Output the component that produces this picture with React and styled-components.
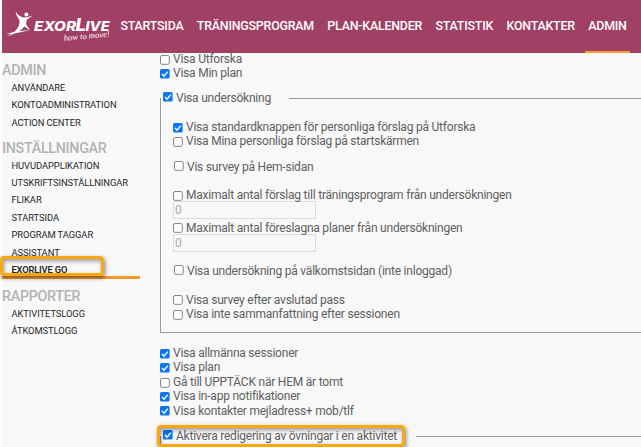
import React from "react";
import styled, { createGlobalStyle } from "styled-components";

const GlobalStyle = createGlobalStyle`
  * {
    box-sizing: border-box;
  }
  body {
    margin: 0;
    background: #fff;
    font-family: Roboto, "Liberation Sans", sans-serif;
  }
`;

const Page = styled.div`
  width: 641px;
  height: 447px;
  padding-left: 2px;
  background: #f8f8f8 content-box;
  display: flex;
  flex-direction: column;
  overflow: hidden;
`;

const Header = styled.header`
  height: 53px;
  flex-shrink: 0;
  background: #9f4064;
  display: flex;
`;

const Logo = styled.svg`
  width: 115px;
  height: 53px;
  flex-shrink: 0;
`;

const Nav = styled.nav`
  display: flex;
  gap: 6.4px;
`;

const NavLink = styled.a`
  height: 53px;
  padding: 0 3.5px;
  font-size: 12.4px;
  font-weight: 500;
  letter-spacing: -0.2px;
  line-height: 51px;
  white-space: nowrap;
  color: #fff;
  border-bottom: 2px solid ${({ $active }) => ($active ? "#fb9a2c" : "transparent")};
`;

const Content = styled.div`
  flex: 1;
  min-height: 0;
  display: flex;
`;

const Sidebar = styled.aside`
  width: 138px;
  flex-shrink: 0;
  padding-top: 8px;
`;

const MenuGroup = styled.section`
  margin-bottom: 7.6px;
`;

const MenuTitle = styled.h2`
  margin: 0;
  height: 18px;
  font-size: 14.3px;
  font-weight: 500;
  letter-spacing: -0.3px;
  line-height: 18.4px;
  color: #b3b3b3;
`;

const MenuItem = styled.a`
  position: relative;
  display: block;
  height: ${({ $active }) => ($active ? "18.1px" : "17.38px")};
  padding-left: 9.5px;
  font-size: 9.4px;
  font-weight: ${({ $active }) => ($active ? 600 : 400)};
  letter-spacing: ${({ $active }) => ($active ? "-0.2px" : "-0.08px")};
  line-height: 17.8px;
  color: #262626;
  white-space: nowrap;
  border-bottom: ${({ $active }) => ($active ? "3px solid #fb9a2c" : "0")};
`;

const Highlight = styled.span`
  position: absolute;
  left: ${({ $left }) => $left}px;
  top: ${({ $top }) => $top}px;
  width: ${({ $width }) => $width}px;
  height: ${({ $height }) => $height}px;
  border: 3px solid #faa80f;
  border-radius: 4px;
  box-shadow: 1px 2px 4px rgba(0, 0, 0, 0.5), inset 1px 2px 4px rgba(0, 0, 0, 0.4);
`;

const Settings = styled.main`
  width: 520px;
  flex-shrink: 0;
  margin-left: 20px;
  margin-top: -1px;
`;

const Row = styled.label`
  display: flex;
  height: 14px;
  margin-top: ${({ $gap }) => $gap || 0}px;
  margin-left: ${({ $indent }) => $indent || 0}px;
  font-size: 12px;
  letter-spacing: -0.22px;
  line-height: 14px;
  color: #606060;
  white-space: nowrap;
`;

const Box = styled.svg`
  width: 10px;
  height: 10px;
  flex-shrink: 0;
  margin-top: ${({ $drop }) => $drop}px;
  margin-right: 3px;
`;

const Fieldset = styled.fieldset`
  min-width: 0;
  height: ${({ $height }) => $height}px;
  margin: ${({ $gap }) => $gap}px 0 0;
  padding: 0;
  border: 1px solid #999;
`;

const Legend = styled.legend`
  position: relative;
  width: ${({ $width }) => $width}px;
  padding: 0 0 0 2px;
`;

const NumberInput = styled.input`
  display: block;
  width: 143px;
  height: 18px;
  margin: -1px 0 0 12px;
  padding: 0 1px;
  border: 1px solid #dcdcdc;
  background: transparent;
  font-family: inherit;
  font-size: 12px;
  color: #aaa;
`;

const menu = [
  { title: "ADMIN", items: ["ANVÄNDARE", "KONTOADMINISTRATION", "ACTION CENTER"] },
  {
    title: "INSTÄLLNINGAR",
    items: [
      "HUVUDAPPLIKATION",
      "UTSKRIFTSINSTÄLLNINGAR",
      "FLIKAR",
      "STARTSIDA",
      "PROGRAM TAGGAR",
      "ASSISTANT",
      "EXORLIVE GO",
    ],
  },
  { title: "RAPPORTER", items: ["AKTIVITETSLOGG", "ÅTKOMSTLOGG"] },
];

const navItems = [
  "STARTSIDA",
  "TRÄNINGSPROGRAM",
  "PLAN-KALENDER",
  "STATISTIK",
  "KONTAKTER",
  "ADMIN",
];

const Check = ({ checked, drop = 3, gap, indent, children }) => (
  <Row $gap={gap} $indent={indent}>
    <Box viewBox="0 0 10 10" $drop={drop}>
      {checked ? (
        <>
          <rect width="9.6" height="9.6" rx="1.5" fill="#0b75f5" />
          <path d="M2 5.1l2 2 3.8-4.5" fill="none" stroke="#fff" strokeWidth="1.4" />
        </>
      ) : (
        <rect x="0.5" y="0.5" width="8.8" height="8.8" rx="1.5" fill="#fff" stroke="#858585" />
      )}
    </Box>
    {children}
  </Row>
);

const App = () => (
  <>
    <GlobalStyle />
    <Page>
      <Header>
        <Logo viewBox="2 0 115 53" fill="#fff">
          <circle cx="26.4" cy="14.6" r="2" />
          <path d="M15.600 11.600c2 3.300 4.400 5.200 7.400 5.800 3 .3 6-.4 9.600-1.800-2.200 2-4.800 3-5.800 4.600-.9 1.500-.6 3.200-.5 4.400.8 1.700 2 3.300 3.800 5.600-2.400-1.300-4.200-2.600-5.700-4-2.200 3.600-7.600 7.200-17.400 10.200 6-3.400 10.300-6.600 11.600-10.500.9-2.200 1.400-4.600.6-6.200-1.300-2.200-3.200-4.300-3.600-8.100z" />
          <path d="M6 34.200c6-2.200 14-3.600 24-3.900-8 1.800-16 3.500-24 3.900z" />
          <g fontFamily="Inter, sans-serif" fontWeight="800" fontStyle="italic">
            <text x="34" y="30.600" fontSize="13.400" textLength="42" lengthAdjust="spacingAndGlyphs">EXOR</text>
            <text x="75.500" y="30.600" fontSize="18" textLength="10.500" lengthAdjust="spacingAndGlyphs">L</text>
            <text x="85.500" y="30.600" fontSize="13.400" textLength="24" lengthAdjust="spacingAndGlyphs">IVE</text>
          </g>
          <text
            x="64"
            y="40.800"
            fontFamily="Liberation Serif, serif"
            fontStyle="italic"
            fontSize="8.500"
            textLength="46"
            transform="rotate(-5 64 40.800)"
          >
            how to move!
          </text>
        </Logo>
        <Nav>
          {navItems.map((item) => (
            <NavLink key={item} $active={item === "ADMIN"}>{item}</NavLink>
          ))}
        </Nav>
      </Header>
      <Content>
        <Sidebar>
          {menu.map((group) => (
            <MenuGroup key={group.title}>
              <MenuTitle>{group.title}</MenuTitle>
              {group.items.map((item) => (
                <MenuItem key={item} $active={item === "EXORLIVE GO"}>
                  {item}
                  {item === "EXORLIVE GO" && (
                    <Highlight $left={-2} $top={-5} $width={104} $height={20} />
                  )}
                </MenuItem>
              ))}
            </MenuGroup>
          ))}
        </Sidebar>
        <Settings>
          <Check>Visa Utforska</Check>
          <Check checked>Visa Min plan</Check>
          <Fieldset $gap={11} $height={242}>
            <Legend $width={128}>
              <Check checked drop={1}>Visa undersökning</Check>
            </Legend>
            <Check checked gap={15} indent={12}>
              Visa standardknappen för personliga förslag på Utforska
            </Check>
            <Check indent={12}>Visa Mina personliga förslag på startskärmen</Check>
            <Check gap={12} indent={13} drop={1}>Vis survey på Hem-sidan</Check>
            <Check gap={14} indent={12}>
              Maximalt antal förslag till träningsprogram från undersökningen
            </Check>
            <NumberInput defaultValue="0" />
            <Check gap={2} indent={12} drop={2}>
              Maximalt antal föreslagna planer från undersökningen
            </Check>
            <NumberInput defaultValue="0" />
            <Check gap={12} indent={13} drop={1}>
              Visa undersökning på välkomstsidan (inte inloggad)
            </Check>
            <Check gap={15} indent={12} drop={2}>Visa survey efter avslutad pass</Check>
            <Check indent={12}>Visa inte sammanfattning efter sessionen</Check>
          </Fieldset>
          <Check checked gap={13}>Visa allmänna sessioner</Check>
          <Check checked>Visa plan</Check>
          <Check gap={1}>Gå till UPPTÄCK när HEM är tomt</Check>
          <Check checked>Visa in-app notifikationer</Check>
          <Check checked gap={1} drop={2}>Visa kontakter mejladress+ mob/tlf</Check>
          <Fieldset $gap={11} $height={60}>
            <Legend $width={255}>
              <Check checked drop={1}>
                Aktivera redigering av övningar i en aktivitet
              </Check>
              <Highlight $left={-4} $top={-4} $width={248} $height={22} />
            </Legend>
          </Fieldset>
        </Settings>
      </Content>
    </Page>
  </>
);

export default App;
